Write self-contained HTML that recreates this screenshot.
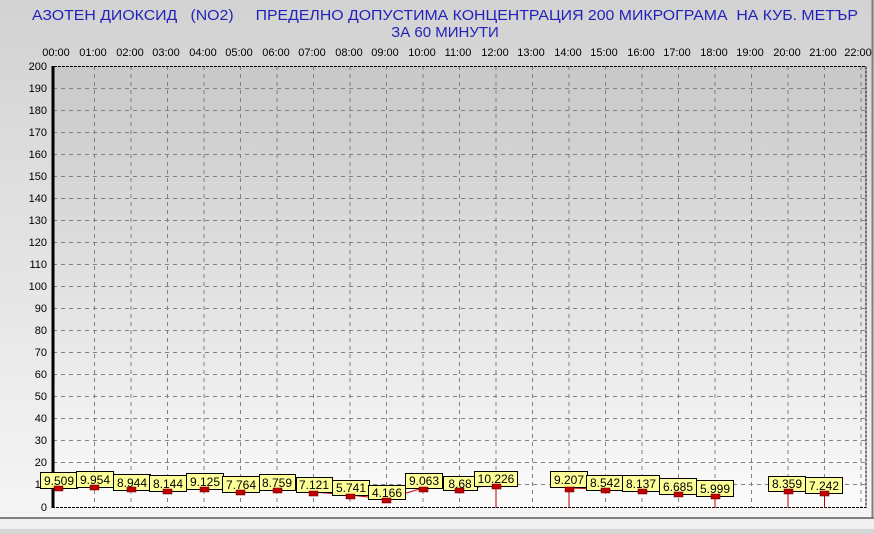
<!DOCTYPE html>
<html><head><meta charset="utf-8"><style>
body{margin:0;width:874px;height:529px;overflow:hidden;background:#d6d6d6;font-family:"Liberation Sans",sans-serif}
</style></head><body>
<svg width="874" height="529" xmlns="http://www.w3.org/2000/svg" font-family="Liberation Sans, sans-serif">
<defs>
<linearGradient id="g" x1="0" y1="0" x2="0" y2="1"><stop offset="0" stop-color="#c8c8c8"/><stop offset="1" stop-color="#fbfbfb"/></linearGradient>
<linearGradient id="o" x1="0" y1="0" x2="0" y2="1"><stop offset="0" stop-color="#d2d2d2"/><stop offset="1" stop-color="#f6f6f6"/></linearGradient>
</defs>
<rect width="874" height="529" fill="url(#o)"/>
<rect x="0" y="519" width="874" height="10" fill="#f0f0f0"/>
<path d="M0 518H874M872.5 0V518" stroke="#808080" stroke-width="2"/>
<rect x="53" y="66" width="813" height="442" fill="url(#g)"/>
<g fill="#2222bb" font-size="15">
<text x="32" y="20" textLength="826" lengthAdjust="spacingAndGlyphs" xml:space="preserve">АЗОТЕН ДИОКСИД   (NO2)     ПРЕДЕЛНО ДОПУСТИМА КОНЦЕНТРАЦИЯ 200 МИКРОГРАМА  НА КУБ. МЕТЪР</text>
<text x="445" y="37" text-anchor="middle">ЗА 60 МИНУТИ</text>
</g>
<g stroke="#808080" stroke-dasharray="4,4">
<path d="M94.5 66V508M131 66V508M167.5 66V508M204 66V508M240.5 66V508M277 66V508M313.5 66V508M350 66V508M386.5 66V508M423 66V508M459.5 66V508M496 66V508M532.5 66V508M569 66V508M605.5 66V508M642 66V508M678.5 66V508M715 66V508M751.5 66V508M788 66V508M824.5 66V508M861 66V508"/>
<path d="M53 88.5H866M53 110.5H866M53 132.5H866M53 154.5H866M53 176.5H866M53 198.5H866M53 220.5H866M53 242.5H866M53 264.5H866M53 286.5H866M53 308.5H866M53 330.5H866M53 352.5H866M53 374.5H866M53 396.5H866M53 418.5H866M53 440.5H866M53 462.5H866M53 484.5H866"/>
</g>
<path d="M54 66.5H866V507.5H54" fill="none" stroke="#000" stroke-dasharray="3,1"/>
<path d="M53 66V508" stroke="#000" stroke-width="3"/>
<g font-size="11" text-anchor="end" fill="#000">
<text x="47" y="70">200</text><text x="47" y="92">190</text><text x="47" y="114">180</text><text x="47" y="136">170</text><text x="47" y="158">160</text><text x="47" y="180">150</text><text x="47" y="202">140</text><text x="47" y="224">130</text><text x="47" y="246">120</text><text x="47" y="268">110</text><text x="47" y="290">100</text><text x="47" y="312">90</text><text x="47" y="334">80</text><text x="47" y="356">70</text><text x="47" y="378">60</text><text x="47" y="400">50</text><text x="47" y="422">40</text><text x="47" y="444">30</text><text x="47" y="466">20</text><text x="47" y="488">10</text><text x="47" y="511">0</text>
</g>
<g font-size="11" text-anchor="middle" fill="#000">
<text x="56" y="56">00:00</text><text x="93" y="56">01:00</text><text x="130" y="56">02:00</text><text x="166" y="56">03:00</text><text x="203" y="56">04:00</text><text x="239" y="56">05:00</text><text x="276" y="56">06:00</text><text x="312" y="56">07:00</text><text x="349" y="56">08:00</text><text x="385" y="56">09:00</text><text x="422" y="56">10:00</text><text x="458" y="56">11:00</text><text x="495" y="56">12:00</text><text x="531" y="56">13:00</text><text x="568" y="56">14:00</text><text x="604" y="56">15:00</text><text x="641" y="56">16:00</text><text x="677" y="56">17:00</text><text x="714" y="56">18:00</text><text x="750" y="56">19:00</text><text x="787" y="56">20:00</text><text x="823" y="56">21:00</text><text x="858" y="56">22:00</text>
</g>
<polyline fill="none" stroke="#c00000" points="58,487 94.5,486 131,488 167.5,490 204,488 240.5,491 277,489 313.5,492 350,495 386.5,499 423,488 459.5,489 496,485"/>
<polyline fill="none" stroke="#c00000" points="569,488 605.5,489 642,490 678.5,493 715,495"/>
<polyline fill="none" stroke="#c00000" points="788,490 824.5,492"/>
<path d="M496 485V508M569 488V508M715 495V508M788 490V508M824.5 492V508" stroke="#c00000"/>
<g fill="#ffff99" stroke="#000">
<rect x="40.5" y="472.5" width="37" height="16"/><rect x="76.5" y="471.5" width="37" height="16"/><rect x="113.5" y="474.5" width="37" height="16"/><rect x="149.5" y="475.5" width="37" height="16"/><rect x="186.5" y="473.5" width="37" height="16"/><rect x="222.5" y="476.5" width="37" height="16"/><rect x="259.5" y="474.5" width="36" height="16"/><rect x="296.5" y="477.5" width="36" height="15"/><rect x="332.5" y="480.5" width="37" height="15"/><rect x="368.5" y="485.5" width="37" height="14"/><rect x="405.5" y="473.5" width="37" height="15"/><rect x="443.5" y="476.5" width="34" height="14"/><rect x="474.5" y="471.5" width="43" height="15"/><rect x="550.5" y="471.5" width="37" height="16"/><rect x="586.5" y="475.5" width="37" height="15"/><rect x="622.5" y="475.5" width="37" height="16"/><rect x="659.5" y="478.5" width="37" height="16"/><rect x="696.5" y="480.5" width="37" height="16"/><rect x="768.5" y="476.5" width="37" height="15"/><rect x="805.5" y="477.5" width="37" height="16"/>
</g>
<g fill="#c00000" stroke="#600000" stroke-width="0.5">
<rect x="54" y="486" width="9" height="5"/><rect x="90" y="485" width="9" height="5"/><rect x="127" y="487" width="9" height="5"/><rect x="163" y="489" width="9" height="5"/><rect x="200" y="487" width="9" height="5"/><rect x="236" y="490" width="9" height="5"/><rect x="273" y="488" width="9" height="5"/><rect x="309" y="491" width="9" height="5"/><rect x="346" y="494" width="9" height="5"/><rect x="382" y="498" width="9" height="5"/><rect x="419" y="487" width="9" height="5"/><rect x="455" y="488" width="9" height="5"/><rect x="492" y="484" width="9" height="5"/><rect x="565" y="487" width="9" height="5"/><rect x="601" y="488" width="9" height="5"/><rect x="638" y="489" width="9" height="5"/><rect x="674" y="492" width="9" height="5"/><rect x="711" y="494" width="9" height="5"/><rect x="784" y="489" width="9" height="5"/><rect x="820" y="491" width="9" height="5"/>
</g>
<g font-size="12" fill="#000" text-anchor="middle">
<text x="59" y="485">9.509</text><text x="95" y="484">9.954</text><text x="132" y="487">8.944</text><text x="168" y="488">8.144</text><text x="205" y="486">9.125</text><text x="241" y="489">7.764</text><text x="277" y="487">8.759</text><text x="314" y="489">7.121</text><text x="351" y="492">5.741</text><text x="387" y="497">4.166</text><text x="424" y="485">9.063</text><text x="460" y="488">8.68</text><text x="496" y="483">10.226</text><text x="569" y="484">9.207</text><text x="605" y="487">8.542</text><text x="641" y="488">8.137</text><text x="678" y="491">6.685</text><text x="715" y="493">5.999</text><text x="787" y="488">8.359</text><text x="824" y="490">7.242</text>
</g>
</svg>
</body></html>
